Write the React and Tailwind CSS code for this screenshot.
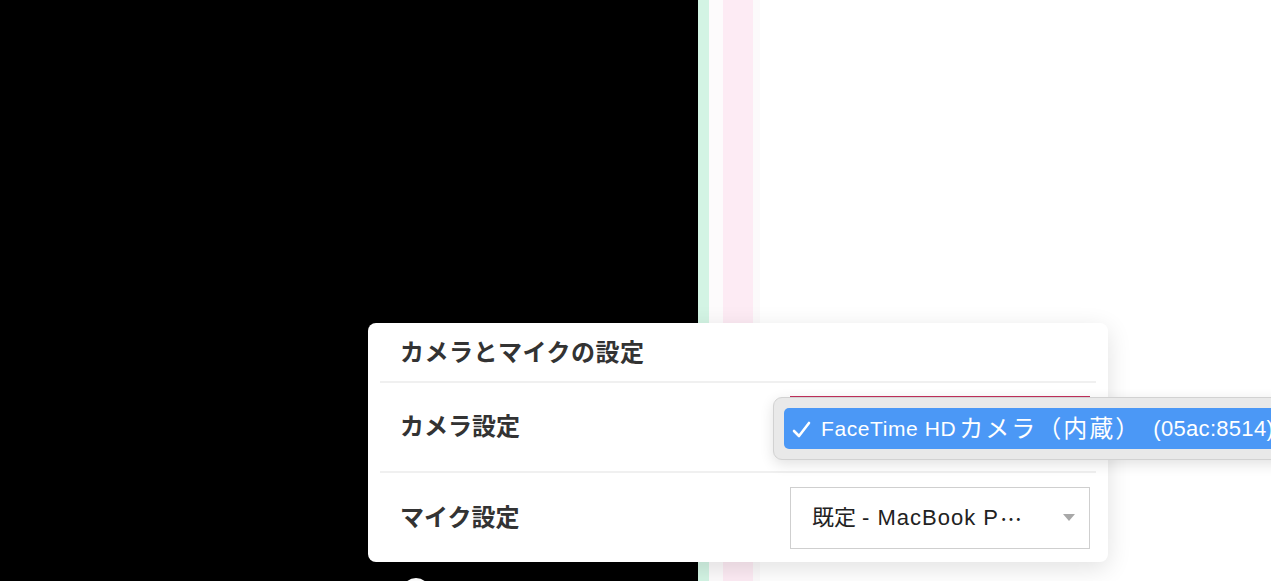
import React from 'react';

const jp = { fontFamily: '"Liberation Sans", "Noto Sans CJK JP", sans-serif' };
const cjkOnly = { fontFamily: '"Noto Sans CJK JP", sans-serif' };

const SettingRow = ({ label, children, focused, last }) => (
  <div className={`flex items-center justify-between pl-[32px] pr-[18px] ${last ? 'h-[90px]' : 'h-[89px]'}`}>
    <span className="text-[24px] font-bold text-[#333]">{label}</span>
    <div
      className={`w-[300px] h-[62px] flex items-center justify-between pl-[21px] pr-[14px] bg-white border ${
        focused ? 'border-[#c2305c]' : 'border-[#cfcfcf]'
      }`}
    >
      <span className="text-[22px] text-[#222] whitespace-nowrap flex items-center">{children}</span>
      <span className="w-0 h-0 border-l-[6px] border-r-[6px] border-t-[7px] border-l-transparent border-r-transparent border-t-[#a8a8a8]"></span>
    </div>
  </div>
);

export default function App() {
  return (
    <div className="relative w-full h-[581px] overflow-hidden bg-white flex" style={jp}>
      {/* page behind the dialog */}
      <div className="w-[698px] h-full bg-black shrink-0"></div>
      <div className="w-[11px] h-full bg-[#d3f4e4] shrink-0"></div>
      <div className="w-[14px] h-full bg-[#fdfbfc] shrink-0"></div>
      <div className="w-[30px] h-full bg-[#fdebf4] shrink-0"></div>
      <div className="w-[7px] h-full bg-[#fcfafb] shrink-0"></div>
      <div className="flex-1 h-full bg-white"></div>

      {/* round button peeking at the bottom of the video */}
      <div className="absolute left-[402px] top-[578px] w-[28px] h-[28px] rounded-full bg-white"></div>

      {/* settings dialog */}
      <div className="absolute left-[368px] top-[323px] w-[740px] h-[239px] bg-white rounded-[8px] shadow-[0_6px_24px_rgba(0,0,0,0.12)] flex flex-col">
        <div className="h-[59px] flex items-center pl-[32px] pt-[2px]">
          <h2 className="text-[24px] font-bold text-[#333] tracking-[0.5px]">カメラとマイクの設定</h2>
        </div>
        <div className="mx-[12px] border-t-2 border-[#f0f0f0]"></div>
        <SettingRow label="カメラ設定" focused />
        <div className="mx-[12px] border-t-2 border-[#f0f0f0]"></div>
        <SettingRow label="マイク設定" last>
          <span>既定</span>
          <span className="ml-[6px] tracking-[1px]">- MacBook P</span>
          <span style={cjkOnly} className="ml-[1px]">…</span>
        </SettingRow>
      </div>

      {/* open select menu */}
      <div className="absolute left-[773px] top-[397px] w-[520px] h-[63px] bg-[#e9e9e9] border border-[#d2d2d2] rounded-[9px] shadow-[0_4px_14px_rgba(0,0,0,0.12)] pl-[10px] pt-[10px]">
        <div className="h-[41px] bg-[#4b98f6] rounded-[5px] flex items-center pl-[8px] text-white text-[21px] whitespace-nowrap">
          <svg width="20" height="18" viewBox="0 0 20 18" className="mr-[9px] mt-[3px]">
            <path d="M2 10 L7 15 L17 2" fill="none" stroke="white" strokeWidth="2.6" strokeLinecap="round" strokeLinejoin="round" />
          </svg>
          <span className="tracking-[0.6px]">FaceTime HD</span>
          <span className="ml-[3px] text-[24px] tracking-[2px]">カメラ（内蔵）</span>
          <span className="ml-[12px] text-[22px] tracking-[0.3px]">(05ac:8514)</span>
        </div>
      </div>
    </div>
  );
}
